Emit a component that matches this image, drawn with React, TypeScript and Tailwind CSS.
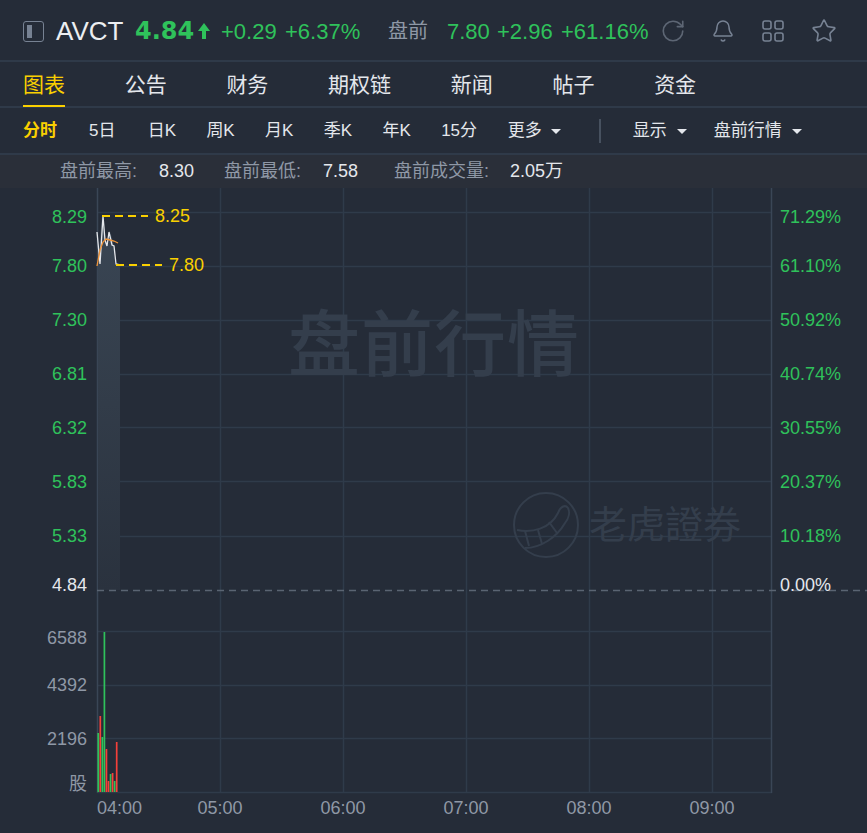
import { Bell, RotateCw, Star } from 'lucide-react';

const tabs = ['图表', '公告', '财务', '期权链', '新闻', '帖子', '资金'];
const periods = ['5日', '日K', '周K', '月K', '季K', '年K', '15分'];

const leftTicks: [string, number][] = [['8.29', 217], ['7.80', 266], ['7.30', 320], ['6.81', 374], ['6.32', 428], ['5.83', 482], ['5.33', 536]];
const rightTicks: [string, number][] = [['71.29%', 217], ['61.10%', 266], ['50.92%', 320], ['40.74%', 374], ['30.55%', 428], ['20.37%', 482], ['10.18%', 536]];
const gridY = [212, 266, 320, 374, 427, 481, 536, 631, 685, 738, 792];
const gridX = [220, 343, 466, 589, 712];
const times: [string, number][] = [['04:00', 119.5], ['05:00', 220], ['06:00', 343], ['07:00', 466], ['08:00', 589], ['09:00', 712]];
const volTicks: [string, number][] = [['6588', 638], ['4392', 685], ['2196', 739]];

const GREEN = '#2fc25b';
const RED = '#f5403a';
// 成交量柱的顶部 y 和颜色
const bars: [number, string][] = [
  [733, GREEN], [716, RED], [737, GREEN], [632, GREEN], [749, RED],
  [781, RED], [774, GREEN], [773, RED], [781, GREEN], [742, RED],
];

function Caret() {
  return <span className="w-0 h-0 border-x-[5px] border-x-transparent border-t-[5px] border-t-[#e4e7ec]" />;
}

function Chart() {
  return (
    <svg width={867} height={645} viewBox="0 188 867 645" className="block" style={{ fontFamily: '"Liberation Sans", "Noto Sans CJK SC", sans-serif' }}>
      <defs>
        <linearGradient id="area" x1="0" y1="0" x2="0" y2="1">
          <stop offset="0" stopColor="#3a4654" />
          <stop offset="1" stopColor="#2a323e" />
        </linearGradient>
      </defs>
      {gridY.map((y) => (
        <line key={y} x1={97} x2={772} y1={y + 0.5} y2={y + 0.5} stroke="#2f3b4a" strokeWidth={1.5} />
      ))}
      {gridX.map((x) => (
        <line key={x} x1={x + 0.5} x2={x + 0.5} y1={188} y2={792} stroke="#2f3b4a" strokeWidth={1.5} />
      ))}
      <line x1={97.5} x2={97.5} y1={188} y2={793} stroke="#3a4656" strokeWidth={1.5} />
      <line x1={771.5} x2={771.5} y1={188} y2={793} stroke="#3a4656" strokeWidth={1.5} />

      <text x={434} y={370} textAnchor="middle" fontSize={72} letterSpacing={1} fill="#343e4c" fontWeight={500}>盘前行情</text>
      <g stroke="#343e4c" strokeWidth={2} fill="none">
        <circle cx={546} cy={525} r={32} />
        <path d="M517 530c15 3 33-1 41-17 2-6 7-9 10-5 2 4 1 10-3 15-8 14-24 25-40 25" />
        <path d="M525 531l4 15M538 530l4 14M549 522l8 11" />
      </g>
      <text x={589} y={538} fontSize={38} fill="#343e4c">老虎證券</text>

      <path d="M98 264L102 216L105 238L108 245L110 232L113 241L115 264L120 265L120 590L98 590Z" fill="url(#area)" />
      <path d="M97 232L100 264L103 216L105 240L107 246L109 232L112 245L114 246L116 264L120 265" fill="none" stroke="#e4e7ec" strokeWidth={1.3} />
      <path d="M97 266L100 250L103 242L106 239L110 240L114 241L118 243" fill="none" stroke="#f0953a" strokeWidth={1.3} />
      <line x1={97} x2={867} y1={590.5} y2={590.5} stroke="#5a6472" strokeWidth={1.3} strokeDasharray="7 5" />

      <line x1={102} x2={148} y1={216} y2={216} stroke="#fad000" strokeWidth={2} strokeDasharray="8 5" />
      <line x1={116} x2={162} y1={265} y2={265} stroke="#fad000" strokeWidth={2} strokeDasharray="8 5" />
      <text x={155} y={222} fontSize={18} fill="#fad000">8.25</text>
      <text x={169} y={271} fontSize={18} fill="#fad000">7.80</text>

      {leftTicks.map(([t, y]) => (
        <text key={t} x={87} y={y + 6} textAnchor="end" fontSize={18} fill={GREEN}>{t}</text>
      ))}
      <text x={87} y={591} textAnchor="end" fontSize={18} fill="#e4e7ec">4.84</text>
      {rightTicks.map(([t, y]) => (
        <text key={t} x={780} y={y + 6} fontSize={18} fill={GREEN}>{t}</text>
      ))}
      <text x={780} y={591} fontSize={18} fill="#e4e7ec">0.00%</text>

      {volTicks.map(([t, y]) => (
        <text key={t} x={87} y={y + 6} textAnchor="end" fontSize={18} fill="#8f98a6">{t}</text>
      ))}
      <text x={87} y={790} textAnchor="end" fontSize={18} fill="#8f98a6">股</text>

      {bars.map(([top, c], i) => (
        <rect key={i} x={97.4 + i * 2.05} y={top} width={1.7} height={792 - top} fill={c} />
      ))}
      {times.map(([t, x]) => (
        <text key={t} x={x} y={814} textAnchor="middle" fontSize={18} fill="#8f98a6">{t}</text>
      ))}
    </svg>
  );
}

export default function App() {
  return (
    <div className="w-[867px] h-[833px] overflow-hidden bg-[#252c38] text-[#e4e7ec]" style={{ fontFamily: '"Liberation Sans", "Noto Sans CJK SC", sans-serif' }}>
      {/* 顶部行情 */}
      <div className="h-[62px] flex items-center pl-[23px] pt-[2px] border-b-2 border-[#2f3a49]">
        <div className="w-[21px] h-[21px] border border-[#778293] rounded-[3px] flex items-center p-[3px] mr-[12px] shrink-0">
          <div className="w-[5px] h-[13px] bg-[#778293]" />
        </div>
        <span className="text-[26px] w-[79px] text-[#eceef1]">AVCT</span>
        <span className="text-[24px] font-bold text-[#2fc25b] leading-none w-[63px]" style={{ fontFamily: '"DejaVu Sans", sans-serif' }}>4.84</span>
        <svg width="12" height="16" viewBox="0 0 12 16" className="shrink-0 w-[12px] mr-[11px]">
          <path d="M6 0L12 8H8V16H4V8H0Z" fill="#2fc25b" />
        </svg>
        <div className="flex items-center text-[22px] text-[#2fc25b]">
          <span className="w-[64px]">+0.29</span>
          <span className="w-[103px]">+6.37%</span>
          <span className="text-[20px] text-[#8f98a6] w-[59px]">盘前</span>
          <span className="w-[50px]">7.80</span>
          <span className="w-[64px]">+2.96</span>
          <span className="w-[100px]">+61.16%</span>
        </div>
        <RotateCw className="w-[26px] h-[26px] text-[#5d6674] -ml-[1px] shrink-0" strokeWidth={1.5} />
        <Bell className="w-[24px] h-[24px] text-[#778293] ml-[25px] shrink-0" strokeWidth={1.5} />
        <svg width="22" height="22" viewBox="0 0 22 22" fill="none" stroke="#778293" strokeWidth={1.6} className="ml-[27px] shrink-0">
          <rect x="1" y="1" width="8" height="8" rx="2" />
          <rect x="13" y="1" width="8" height="8" rx="2" />
          <rect x="1" y="13" width="8" height="8" rx="2" />
          <rect x="13" y="13" width="8" height="8" rx="2" />
        </svg>
        <Star className="w-[26px] h-[26px] text-[#778293] ml-[27px] shrink-0" strokeWidth={1.5} />
      </div>

      {/* 标签 */}
      <div className="h-[46px] flex items-stretch pl-[23px] border-b-2 border-[#2f3a49]">
        {tabs.map((t, i) => (
          <div key={t} className={`mr-[59.7px] text-[21px] pt-[3px] flex items-center border-b-2 -mb-[1px] ${i === 0 ? 'text-[#fad000] border-[#fad000]' : 'border-transparent'}`}>
            {t}
          </div>
        ))}
      </div>

      {/* 周期 */}
      <div className="h-[47px] flex items-center pl-[23px] pt-[1px] text-[17px] border-b-2 border-[#2f3a49]">
        <span className="text-[#fad000] font-bold w-[66px]">分时</span>
        {periods.map((p) => (
          <span key={p} className="w-[58.7px]">{p}</span>
        ))}
        <span className="flex items-center w-[91px] ml-[8px] gap-[9px]">更多<Caret /></span>
        <span className="w-[2px] h-[24px] bg-[#47515f] mr-[32px]" />
        <span className="flex items-center w-[81px] gap-[10px]">显示<Caret /></span>
        <span className="flex items-center gap-[10px]">盘前行情<Caret /></span>
      </div>

      {/* 盘前统计 */}
      <div className="h-[33px] flex items-center pl-[60px] text-[18px] bg-[#2a2f39]">
        <span className="text-[#8f98a6] w-[99px]">盘前最高:</span>
        <span className="w-[65px]">8.30</span>
        <span className="text-[#8f98a6] w-[99px]">盘前最低:</span>
        <span className="w-[71px]">7.58</span>
        <span className="text-[#8f98a6] w-[116px]">盘前成交量:</span>
        <span>2.05万</span>
      </div>

      <Chart />
    </div>
  );
}
